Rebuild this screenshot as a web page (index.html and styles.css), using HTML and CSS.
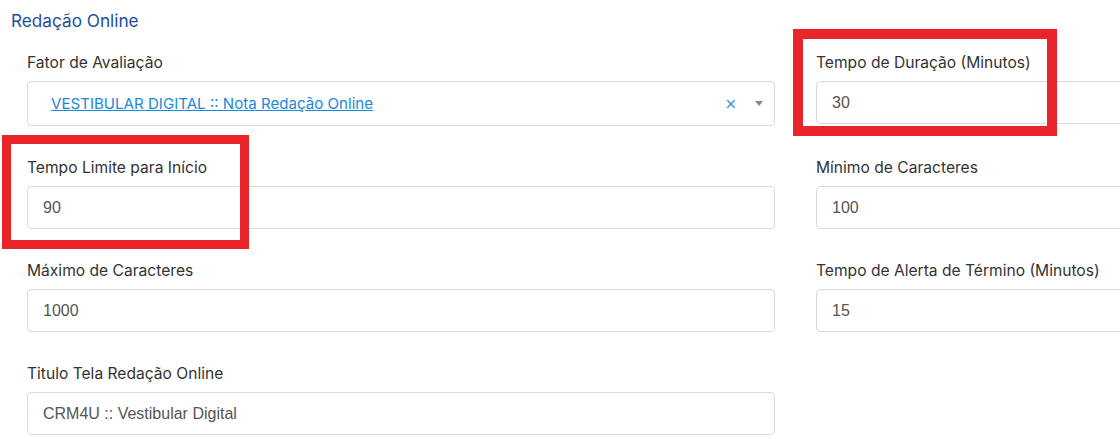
FILE: index.html
```html
<!DOCTYPE html>
<html lang="pt-BR">
<head>
<meta charset="utf-8">
<title>Redação Online</title>
<link rel="stylesheet" href="styles.css">
</head>
<body>
<div class="page">
  <h2 class="section-title">Redação Online</h2>
  <div class="form-grid">
    <div class="field">
      <label class="label">Fator de Avaliação</label>
      <div class="select">
        <a class="select-value" href="#">VESTIBULAR DIGITAL :: Nota Redação Online</a>
        <span class="select-clear">×</span>
        <span class="select-arrow"></span>
      </div>
    </div>
    <div class="field">
      <span class="mark mark-a"></span>
      <label class="label">Tempo de Duração (Minutos)</label>
      <div class="input">30</div>
    </div>
    <div class="field">
      <span class="mark mark-b"></span>
      <label class="label">Tempo Limite para Início</label>
      <div class="input">90</div>
    </div>
    <div class="field">
      <label class="label">Mínimo de Caracteres</label>
      <div class="input">100</div>
    </div>
    <div class="field">
      <label class="label">Máximo de Caracteres</label>
      <div class="input">1000</div>
    </div>
    <div class="field">
      <label class="label">Tempo de Alerta de Término (Minutos)</label>
      <div class="input">15</div>
    </div>
    <div class="field">
      <label class="label">Titulo Tela Redação Online</label>
      <div class="input">CRM4U :: Vestibular Digital</div>
    </div>
  </div>
</div>
</body>
</html>
```
FILE: styles.css
```css
html, body {
  margin: 0;
  padding: 0;
  background: #ffffff;
  overflow: hidden;
}
.page {
  width: 1120px;
  overflow: hidden;
  padding: 10px 0 0 11px;
  box-sizing: border-box;
  font-family: Inter, "Noto Sans", sans-serif;
}
.section-title {
  margin: 0 0 20px 0;
  font-size: 17.2px;
  line-height: 22px;
  font-weight: 400;
  color: #1f4e9e;
}
.form-grid {
  display: grid;
  grid-template-columns: 748px 748px;
  column-gap: 41px;
  row-gap: 31px;
  padding-left: 16px;
}
.field {
  position: relative;
  display: flex;
  flex-direction: column;
}
.label {
  font-size: 15.6px;
  line-height: 22px;
  color: #333333;
  margin-bottom: 7px;
}
.input {
  box-sizing: border-box;
  height: 43px;
  border: 1px solid #dadada;
  border-radius: 4px;
  padding: 0 15px;
  display: flex;
  align-items: center;
  font-family: "Liberation Sans", Arial, sans-serif;
  font-size: 16px;
  color: #555555;
}
.select {
  box-sizing: border-box;
  height: 45px;
  border: 1px solid #dadada;
  border-radius: 4px;
  padding: 0 11px 0 23px;
  display: flex;
  align-items: center;
}
.select-value {
  flex: 1;
  color: #1a8ad8;
  text-decoration: underline;
  font-size: 15.1px;
}
.select-clear {
  color: #3b8fe3;
  font-family: "DejaVu Sans", sans-serif;
  font-size: 15px;
  margin-right: 18px;
}
.select-arrow {
  width: 0;
  height: 0;
  border-left: 4px solid transparent;
  border-right: 4px solid transparent;
  border-top: 5px solid #888888;
}
.mark {
  position: absolute;
  border: 10px solid #e8262a;
  pointer-events: none;
}
.mark-a {
  left: -23px;
  top: -23px;
  width: 244px;
  height: 87px;
}
.mark-b {
  left: -25px;
  top: -22px;
  width: 229px;
  height: 96px;
  border-width: 9px;
}
```
